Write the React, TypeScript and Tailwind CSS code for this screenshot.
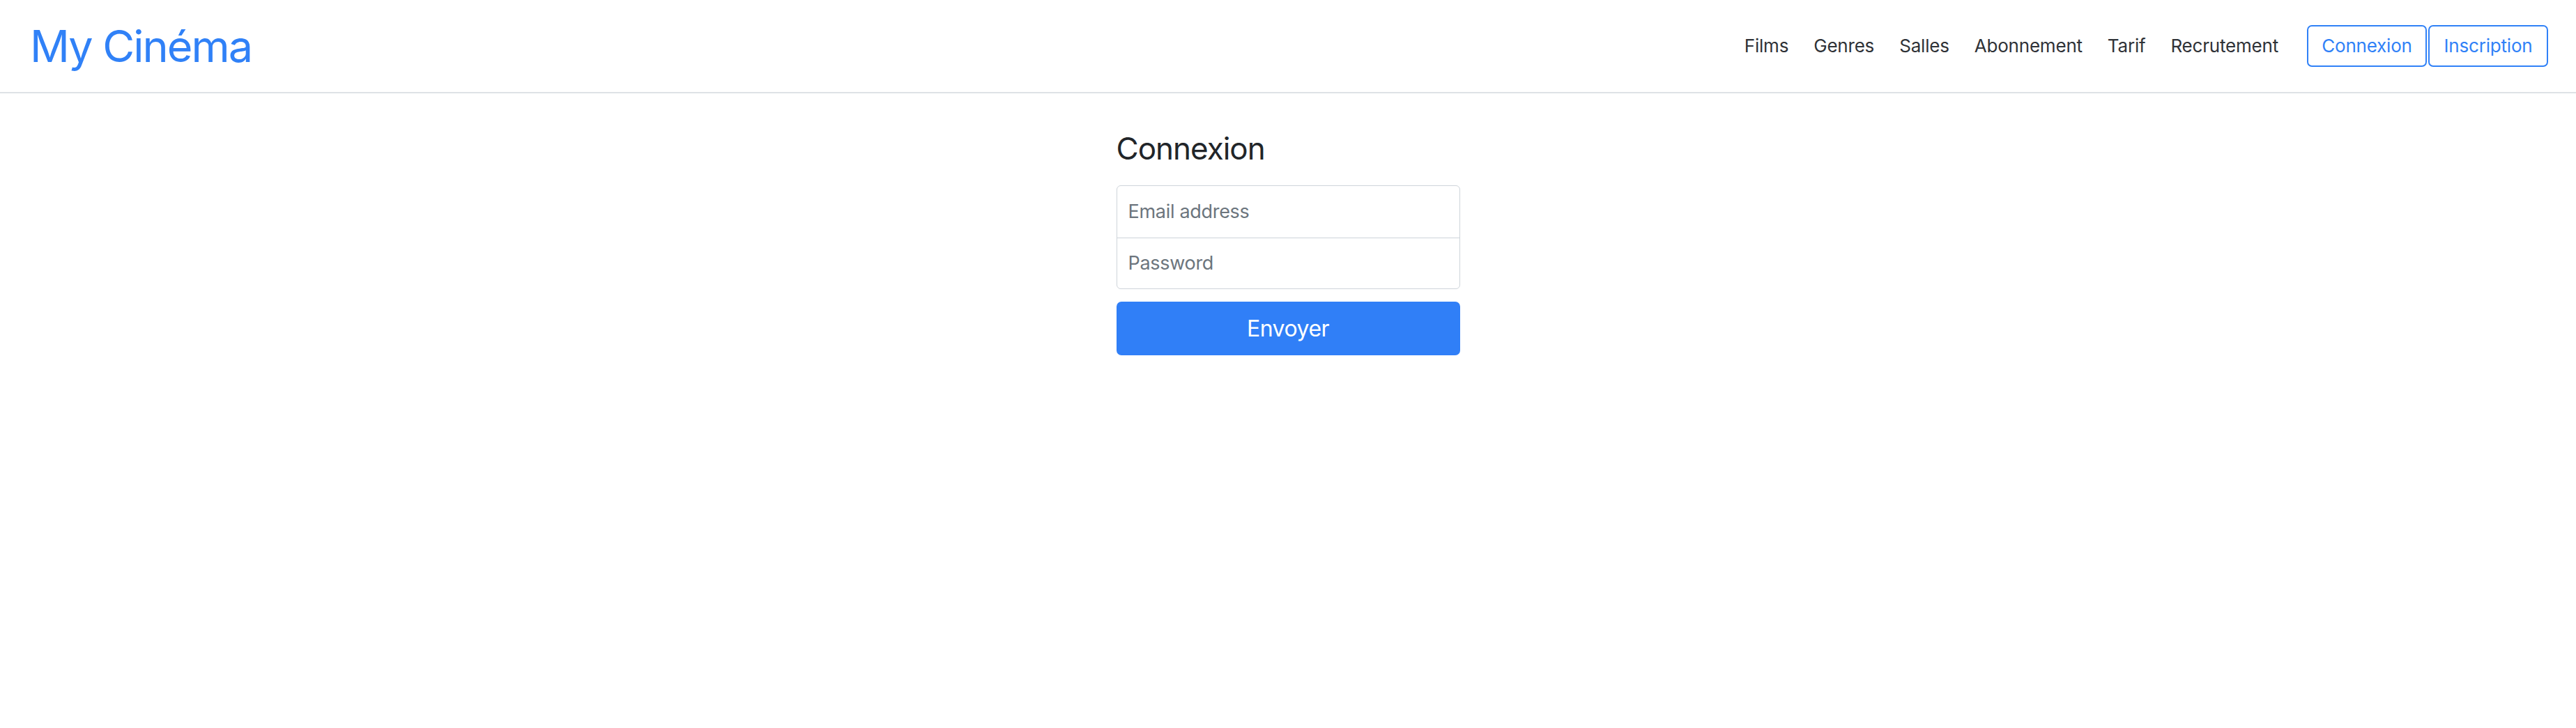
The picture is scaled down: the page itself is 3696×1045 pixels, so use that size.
import React from "react";

export default function App() {
  const links = ["Films", "Genres", "Salles", "Abonnement", "Tarif", "Recrutement"];
  return (
    <div className="min-h-screen bg-white" style={{ fontFamily: "Inter, 'Noto Sans', sans-serif" }}>
      <header className="h-[134px] border-b-2 border-[#dee2e6] flex items-center justify-between pl-[43px] pr-[40px]">
        <a className="text-[63px] leading-none text-[#3081f7] tracking-[-2px]">My Cinéma</a>
        <nav className="flex items-center">
          {links.map((l) => (
            <a key={l} className="px-[18px] text-[26px] leading-none tracking-[-0.2px] text-[#2f3237]">
              {l}
            </a>
          ))}
          <div className="flex items-center gap-[2px] ml-[23px]">
            <button className="w-[172px] h-[60px] border-2 border-[#3081f7] rounded-[7px] text-[26px] leading-none tracking-[-0.2px] text-[#3081f7]">
              Connexion
            </button>
            <button className="w-[172px] h-[60px] border-2 border-[#3081f7] rounded-[7px] text-[26px] leading-none tracking-[-0.2px] text-[#3081f7]">
              Inscription
            </button>
          </div>
        </nav>
      </header>
      <main className="flex justify-center">
        <form className="w-[493px] mt-[57px]">
          <h2 className="text-[44px] leading-none tracking-[-1px] text-[#212529] mb-[31px]">Connexion</h2>
          <div className="border border-[#ced4da] rounded-[6px] flex flex-col">
            <div className="h-[75px] border-b border-[#ced4da] flex items-center px-[16px] text-[27px] tracking-[-0.3px] text-[#6c757d]">
              Email address
            </div>
            <div className="h-[72px] flex items-center px-[16px] text-[27px] tracking-[-0.3px] text-[#6c757d]">
              Password
            </div>
          </div>
          <button
            type="button"
            className="mt-[18px] w-full h-[77px] rounded-[7px] bg-[#307ff7] text-white text-[32px] leading-none tracking-[-0.5px] flex items-center justify-center"
          >
            Envoyer
          </button>
        </form>
      </main>
    </div>
  );
}
